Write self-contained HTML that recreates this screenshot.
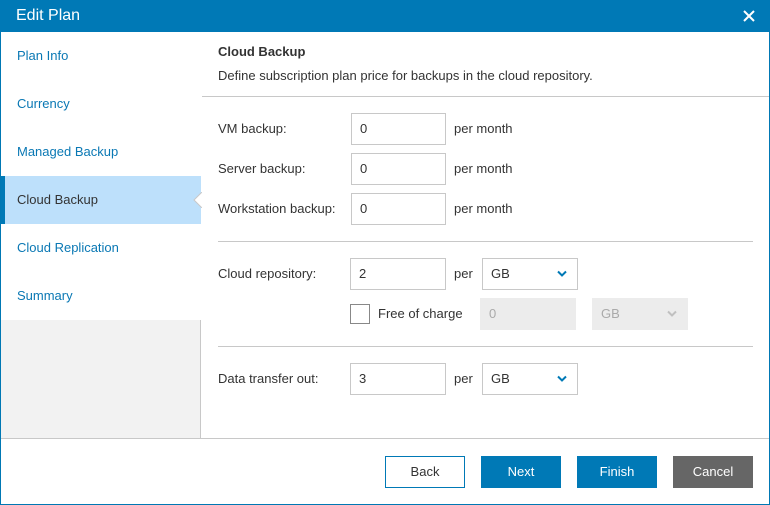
<!DOCTYPE html>
<html><head><style>
*{box-sizing:border-box;margin:0;padding:0}
body{width:770px;height:505px;font-family:"Liberation Sans",sans-serif;font-size:13px;color:#333;position:relative;overflow:hidden;background:#fff}
.a{position:absolute}
.dlg{left:0;top:0;width:770px;height:505px;border:1px solid #0078b4}
.title{left:0;top:0;width:770px;height:32px;background:#0079b6;color:#fff;font-size:16px;line-height:32px;padding-left:16px}
.nav{left:1px;top:32px;width:200px;height:406px;background:#f2f2f2;border-right:1px solid #c8c8c8}
.ni{position:absolute;left:0;width:200px;height:48px;line-height:48px;padding-left:16px;color:#0a78b4;background:#fff}
.sel{background:#bde0fb;color:#333;border-left:4px solid #0079b6;padding-left:12px}
.lbl{line-height:32px}
.in{height:32px;border:1px solid #c8c8c8;line-height:30px;padding-left:8px;background:#fff}
.dis{background:#ececec;border-color:#ececec;color:#aaa}
.hr{height:1px;background:#c8c8c8}
.btn{top:456px;width:80px;height:32px;line-height:32px;text-align:center;color:#fff;background:#0079b6}
.chev{position:absolute;right:10px;top:11px}
</style></head><body>
<div class="a dlg"></div>
<div class="a title">Edit Plan</div>
<svg class="a" style="left:743px;top:10px" width="12" height="12"><path d="M1 1L11 11M11 1L1 11" stroke="#fff" stroke-width="2"/></svg>
<div class="a nav">
<div class="ni" style="top:0">Plan Info</div>
<div class="ni" style="top:48px">Currency</div>
<div class="ni" style="top:96px">Managed Backup</div>
<div class="ni sel" style="top:144px">Cloud Backup</div>
<div class="ni" style="top:192px">Cloud Replication</div>
<div class="ni" style="top:240px">Summary</div>
</div>
<svg class="a" style="left:193px;top:192px" width="9" height="16"><path d="M9 0L1 8L9 16Z" fill="#fff"/><path d="M9 0L1 8L9 16" fill="none" stroke="#c8c8c8"/></svg>
<div class="a" style="left:218px;top:44px;font-weight:bold">Cloud Backup</div>
<div class="a" style="left:218px;top:68px">Define subscription plan price for backups in the cloud repository.</div>
<div class="a hr" style="left:202px;top:96px;width:567px"></div>
<div class="a lbl" style="left:218px;top:113px">VM backup:</div>
<div class="a in" style="left:351px;top:113px;width:95px">0</div>
<div class="a lbl" style="left:454px;top:113px">per month</div>
<div class="a lbl" style="left:218px;top:153px">Server backup:</div>
<div class="a in" style="left:351px;top:153px;width:95px">0</div>
<div class="a lbl" style="left:454px;top:153px">per month</div>
<div class="a lbl" style="left:218px;top:193px">Workstation backup:</div>
<div class="a in" style="left:351px;top:193px;width:95px">0</div>
<div class="a lbl" style="left:454px;top:193px">per month</div>
<div class="a hr" style="left:218px;top:241px;width:535px"></div>
<div class="a lbl" style="left:218px;top:258px">Cloud repository:</div>
<div class="a in" style="left:350px;top:258px;width:96px">2</div>
<div class="a lbl" style="left:454px;top:258px">per</div>
<div class="a in" style="left:482px;top:258px;width:96px">GB<svg class="chev" width="10" height="8"><path d="M1 1.5L5 5.5L9 1.5" fill="none" stroke="#0079b6" stroke-width="2"/></svg></div>
<div class="a" style="left:350px;top:304px;width:20px;height:20px;border:1px solid #888"></div>
<div class="a lbl" style="left:378px;top:298px">Free of charge</div>
<div class="a in dis" style="left:480px;top:298px;width:96px">0</div>
<div class="a in dis" style="left:592px;top:298px;width:96px">GB<svg class="chev" width="10" height="8"><path d="M1 1.5L5 5.5L9 1.5" fill="none" stroke="#c0c0c0" stroke-width="2"/></svg></div>
<div class="a hr" style="left:218px;top:346px;width:535px"></div>
<div class="a lbl" style="left:218px;top:363px">Data transfer out:</div>
<div class="a in" style="left:350px;top:363px;width:96px">3</div>
<div class="a lbl" style="left:454px;top:363px">per</div>
<div class="a in" style="left:482px;top:363px;width:96px">GB<svg class="chev" width="10" height="8"><path d="M1 1.5L5 5.5L9 1.5" fill="none" stroke="#0079b6" stroke-width="2"/></svg></div>
<div class="a hr" style="left:1px;top:438px;width:768px"></div>
<div class="a btn" style="left:385px;background:#fff;color:#333;border:1px solid #0079b6;line-height:30px">Back</div>
<div class="a btn" style="left:481px">Next</div>
<div class="a btn" style="left:577px">Finish</div>
<div class="a btn" style="left:673px;background:#666">Cancel</div>
</body></html>
